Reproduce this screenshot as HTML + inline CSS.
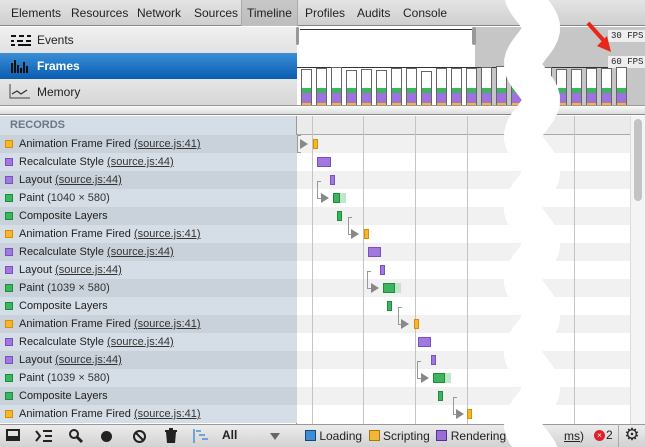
<!DOCTYPE html>
<html><head><style>
*{margin:0;padding:0;box-sizing:border-box}
body{width:645px;height:447px;overflow:hidden;position:relative;font-family:"Liberation Sans",sans-serif;font-size:11px;color:#222;background:#fff}
.a{position:absolute}
.tab{position:absolute;top:0;height:26px;line-height:27px;font-size:12px;color:#222}
.row{position:absolute;left:0;width:297px;height:18px;line-height:18px;padding-left:19px;font-size:11px}
.row i{position:absolute;left:5px;top:5px;width:8px;height:8px;border:1px solid}
.row u{color:#333}
.o{background:#f8b52e;border-color:#d68f00!important}
.p{background:#a178e0;border-color:#7a50c0!important}
.g{background:#3cb55e;border-color:#1d8c3b!important}
.rr{position:absolute;left:297px;width:333px;height:18px}
.bar{position:absolute;height:10px;border:1px solid}
.tri{position:absolute;width:0;height:0;border-left:8px solid #888;border-top:5px solid transparent;border-bottom:5px solid transparent}
.br{position:absolute;width:4px;height:26px;border:1px solid #999;border-right:none}
.vl{position:absolute;top:116px;width:1px;height:308px;background:#c4c4c4}
.fb{position:absolute;width:11px;border:1px solid #666;background:#fff}
</style></head><body>
<div class="a" style="left:0;top:0;width:645px;height:26px;background:linear-gradient(#e4e4e4,#cfcfcf);border-bottom:1px solid #888"></div>
<div class="a" style="left:241px;top:0;width:57px;height:26px;background:linear-gradient(#c8c8c8,#bdbdbd);border-left:1px solid #aaa;border-right:1px solid #aaa"></div>
<div class="tab" style="left:11px">Elements</div>
<div class="tab" style="left:71px">Resources</div>
<div class="tab" style="left:137px">Network</div>
<div class="tab" style="left:194px">Sources</div>
<div class="tab" style="left:247px">Timeline</div>
<div class="tab" style="left:305px">Profiles</div>
<div class="tab" style="left:357px">Audits</div>
<div class="tab" style="left:403px">Console</div>
<div class="a" style="left:0;top:27px;width:297px;height:26px;background:linear-gradient(#f0f0f0,#e2e2e2)"></div>
<div class="a" style="left:0;top:53px;width:297px;height:26px;background:linear-gradient(#3a8fd6,#0a5cb0)"></div>
<div class="a" style="left:0;top:79px;width:297px;height:26px;background:linear-gradient(#e6e6e6,#d6d6d6)"></div>
<svg class="a" style="left:9px;top:33px" width="24" height="14"><g stroke="#111" stroke-width="2"><path d="M2 3h5M10 3h5M18 3h4M2 8h3M8 8h6M17 8h5M2 12h4M9 12h13"/></g></svg>
<div class="a" style="left:37px;top:27px;line-height:26px;font-size:12px">Events</div>
<svg class="a" style="left:10px;top:57px" width="20" height="16"><g fill="#111"><rect x="1" y="6" width="2" height="10"/><rect x="4" y="3" width="2" height="13"/><rect x="7" y="8" width="2" height="8"/><rect x="10" y="11" width="2" height="5"/><rect x="13" y="5" width="2" height="11"/><rect x="16" y="9" width="2" height="7"/></g></svg>
<div class="a" style="left:37px;top:53px;line-height:26px;font-size:12px;font-weight:bold;color:#fff">Frames</div>
<svg class="a" style="left:9px;top:83px" width="22" height="16"><path d="M1 1v14h20" stroke="#444" fill="none"/><path d="M3 11l5-3 4 3 6-4" stroke="#333" fill="none" stroke-width="1.3"/></svg>
<div class="a" style="left:37px;top:79px;line-height:26px;font-size:12px">Memory</div>
<div class="a" style="left:297px;top:27px;width:348px;height:78px;background:#c6c6c6"></div>
<div class="a" style="left:297px;top:27px;width:178px;height:78px;background:#fff"></div>
<div class="a" style="left:296px;top:27px;width:3px;height:18px;background:#999;border-radius:2px"></div>
<div class="a" style="left:472px;top:27px;width:4px;height:18px;background:#999;border-radius:2px"></div>
<div class="a" style="left:300px;top:29px;width:172px;height:1px;background:#333"></div>
<div class="a" style="left:297px;top:67px;width:348px;height:1px;background:#333"></div>
<div class="a" style="left:608px;top:30px;width:37px;height:12px;background:#eee;font:9px 'Liberation Mono',monospace;line-height:12px;padding-left:3px">30 FPS</div>
<div class="a" style="left:608px;top:56px;width:37px;height:12px;background:#eee;font:9px 'Liberation Mono',monospace;line-height:12px;padding-left:3px">60 FPS</div>
<svg class="a" style="left:585px;top:20px" width="30" height="36"><path d="M3 3L20 22" stroke="#e8261a" stroke-width="4"/><path d="M12 26L26 32L22 16Z" fill="#e8261a"/></svg>
<div id="fr"></div>
<div class="a" style="left:297px;top:105px;width:348px;height:10px;background:linear-gradient(#fafafa,#dcdcdc);border-top:1px solid #999;border-bottom:1px solid #888"></div>
<div class="a" style="left:0;top:105px;width:297px;height:10px;background:linear-gradient(#fafafa,#dcdcdc);border-top:1px solid #999;border-bottom:1px solid #888"></div>
<div class="a" style="left:0;top:116px;width:297px;height:19px;background:#d5dde6;color:#6b7785;font-weight:bold;font-size:11px;line-height:19px;padding-left:10px">RECORDS</div>
<div class="a" style="left:297px;top:116px;width:348px;height:19px;background:#ebebeb;border-bottom:1px solid #aaa"></div>
<div class="a" style="left:296px;top:116px;width:1px;height:308px;background:#999"></div>
<div id="rows"></div>
<div class="a" style="left:630px;top:116px;width:15px;height:308px;background:#f4f4f4;border-left:1px solid #ddd"></div>
<div class="a" style="left:634px;top:119px;width:8px;height:82px;background:#c3c3c3;border-radius:4px"></div>
<div class="a" style="left:0;top:424px;width:645px;height:23px;background:linear-gradient(#ececec,#d2d2d2);border-top:1px solid #999"></div>
<div class="a" style="left:0;top:424px;width:297px;height:23px;font-size:12px">
<svg class="a" style="left:6px;top:5px" width="16" height="14"><rect x="1" y="1" width="12" height="10" fill="none" stroke="#222" stroke-width="2"/><rect x="1" y="7" width="12" height="4" fill="#222"/></svg>
<svg class="a" style="left:34px;top:5px" width="20" height="14"><path d="M2 2l4 5-4 5" stroke="#222" stroke-width="2" fill="none"/><path d="M9 2h9M11 7h7M9 12h9" stroke="#222" stroke-width="2"/></svg>
<svg class="a" style="left:68px;top:4px" width="16" height="16"><circle cx="6" cy="6" r="4" stroke="#222" stroke-width="2" fill="none"/><path d="M9 9l5 5" stroke="#222" stroke-width="3"/></svg>
<div class="a" style="left:101px;top:7px;width:11px;height:11px;border-radius:50%;background:#222"></div>
<svg class="a" style="left:132px;top:5px" width="15" height="15"><circle cx="7.5" cy="7.5" r="5.5" stroke="#222" stroke-width="2" fill="none"/><path d="M4 4l7 7" stroke="#222" stroke-width="2"/></svg>
<svg class="a" style="left:164px;top:4px" width="14" height="16"><path d="M1 3h12" stroke="#222" stroke-width="2"/><path d="M5 1h4" stroke="#222" stroke-width="2"/><path d="M2 4l1 11h8l1-11z" fill="#222"/></svg>
<svg class="a" style="left:192px;top:4px" width="20" height="16"><path d="M2 1v14M4 3h5M7 7h6M10 11h6" stroke="#4a90d6" stroke-width="1.5"/></svg>
<div class="a" style="left:222px;top:4px;font-weight:bold">All</div>
<div class="a" style="left:270px;top:9px;border-top:7px solid #666;border-left:5px solid transparent;border-right:5px solid transparent"></div>
</div>
<div class="a" style="left:305px;top:428px;font-size:12px;line-height:17px">
<span style="display:inline-block;width:11px;height:11px;background:#3b8ed9;border:1px solid #246;vertical-align:-1px"></span> Loading&nbsp;&nbsp;<span style="display:inline-block;width:11px;height:11px;background:#f3b53a;border:1px solid #a70;vertical-align:-1px"></span> Scripting&nbsp;&nbsp;<span style="display:inline-block;width:11px;height:11px;background:#9b6dd6;border:1px solid #538;vertical-align:-1px"></span> Rendering</div>
<div class="a" style="left:564px;top:429px;font-size:12px"><u>ms</u>)</div>
<div class="a" style="left:594px;top:430px;width:11px;height:11px;border-radius:50%;background:#e0202a;color:#fff;font-size:8px;text-align:center;line-height:11px">×</div>
<div class="a" style="left:606px;top:428px;font-size:12px">2</div>
<div class="a" style="left:618px;top:424px;width:27px;height:23px;border-left:1px solid #aaa;font-size:17px;text-align:center;line-height:22px;color:#222">⚙</div>
<svg class="a" style="left:0;top:0" width="645" height="447"><path id="wv" d="" stroke="#fff" stroke-width="38" fill="none"/></svg>
<script>
var fr='',H=[69,68,67,70,69,70,68,68,71,68,68,68,67,66,69,67,67,69,69,68,68,67];
for(var i=0;i<22;i++){var x=301+15*i,t=H[i];fr+='<div class="fb" style="left:'+x+'px;top:'+t+'px;height:'+(105-t)+'px"></div><div class="a" style="left:'+(x+1)+'px;top:88px;width:9px;height:5px;background:#3cb55e"></div><div class="a" style="left:'+(x+1)+'px;top:93px;width:9px;height:10px;background:#9f72e0"></div><div class="a" style="left:'+(x+1)+'px;top:103px;width:9px;height:2px;background:#f8b52e"></div>';}
document.getElementById('fr').innerHTML=fr;
var names=[['o','Animation Frame Fired','(source.js:41)',1],['p','Recalculate Style','(source.js:44)',1],['p','Layout','(source.js:44)',1],['g','Paint','(1040 × 580)',0],['g','Composite Layers','',0],
['o','Animation Frame Fired','(source.js:41)',1],['p','Recalculate Style','(source.js:44)',1],['p','Layout','(source.js:44)',1],['g','Paint','(1039 × 580)',0],['g','Composite Layers','',0],
['o','Animation Frame Fired','(source.js:41)',1],['p','Recalculate Style','(source.js:44)',1],['p','Layout','(source.js:44)',1],['g','Paint','(1039 × 580)',0],['g','Composite Layers','',0],['o','Animation Frame Fired','(source.js:41)',1]];
var bars=[[313,5,300,0],[317,14],[330,5],[333,7,321,317],[337,5],[364,5,351,348],[368,13],[380,5],[383,12,371,367],[387,5],[414,5,401,398],[418,13],[431,5],[433,12,421,417],[438,5],[467,5,456,453]];
var h='';
for(var r=0;r<16;r++){var y=135+18*r,n=names[r];
h+='<div class="row" style="top:'+y+'px;background:'+(r%2?'#d5dde6':'#c9d1da')+'"><i class="'+n[0]+'"></i>'+n[1]+' '+(n[3]?'<u>'+n[2]+'</u>':'<span style="color:#333">'+n[2]+'</span>')+'</div>';
h+='<div class="rr" style="top:'+y+'px;background:'+(r%2?'#fff':'#f1f1f1')+'"></div>';}
[312,363,415,467,574].forEach(function(x){h+='<div class="vl" style="left:'+x+'px"></div>';});
for(var r=0;r<16;r++){var y=135+18*r,b=bars[r],c=names[r][0];
if(b[2]){h+='<div class="tri" style="left:'+b[2]+'px;top:'+(y+4)+'px"></div>';if(b[3])h+='<div class="br" style="left:'+b[3]+'px;top:'+(y-8)+'px;height:18px"></div>';else h+='<div class="br" style="left:'+(b[2]-3)+'px;top:'+y+'px;height:18px"></div>';}
h+='<div class="bar '+c+'" style="left:'+b[0]+'px;top:'+(y+4)+'px;width:'+b[1]+'px"></div>';
if(c=='g'&&b[2])h+='<div class="a" style="left:'+(b[0]+b[1])+'px;top:'+(y+4)+'px;width:6px;height:10px;background:#bfe6c8"></div>';}
document.getElementById('rows').innerHTML=h;
var d='M532 -10';for(var y=-10;y<=460;y+=4){d+=' L'+(532+9*Math.sin((y-10)/72*2*Math.PI)).toFixed(1)+' '+y;}
document.getElementById('wv').setAttribute('d',d);
</script>
</body></html>
